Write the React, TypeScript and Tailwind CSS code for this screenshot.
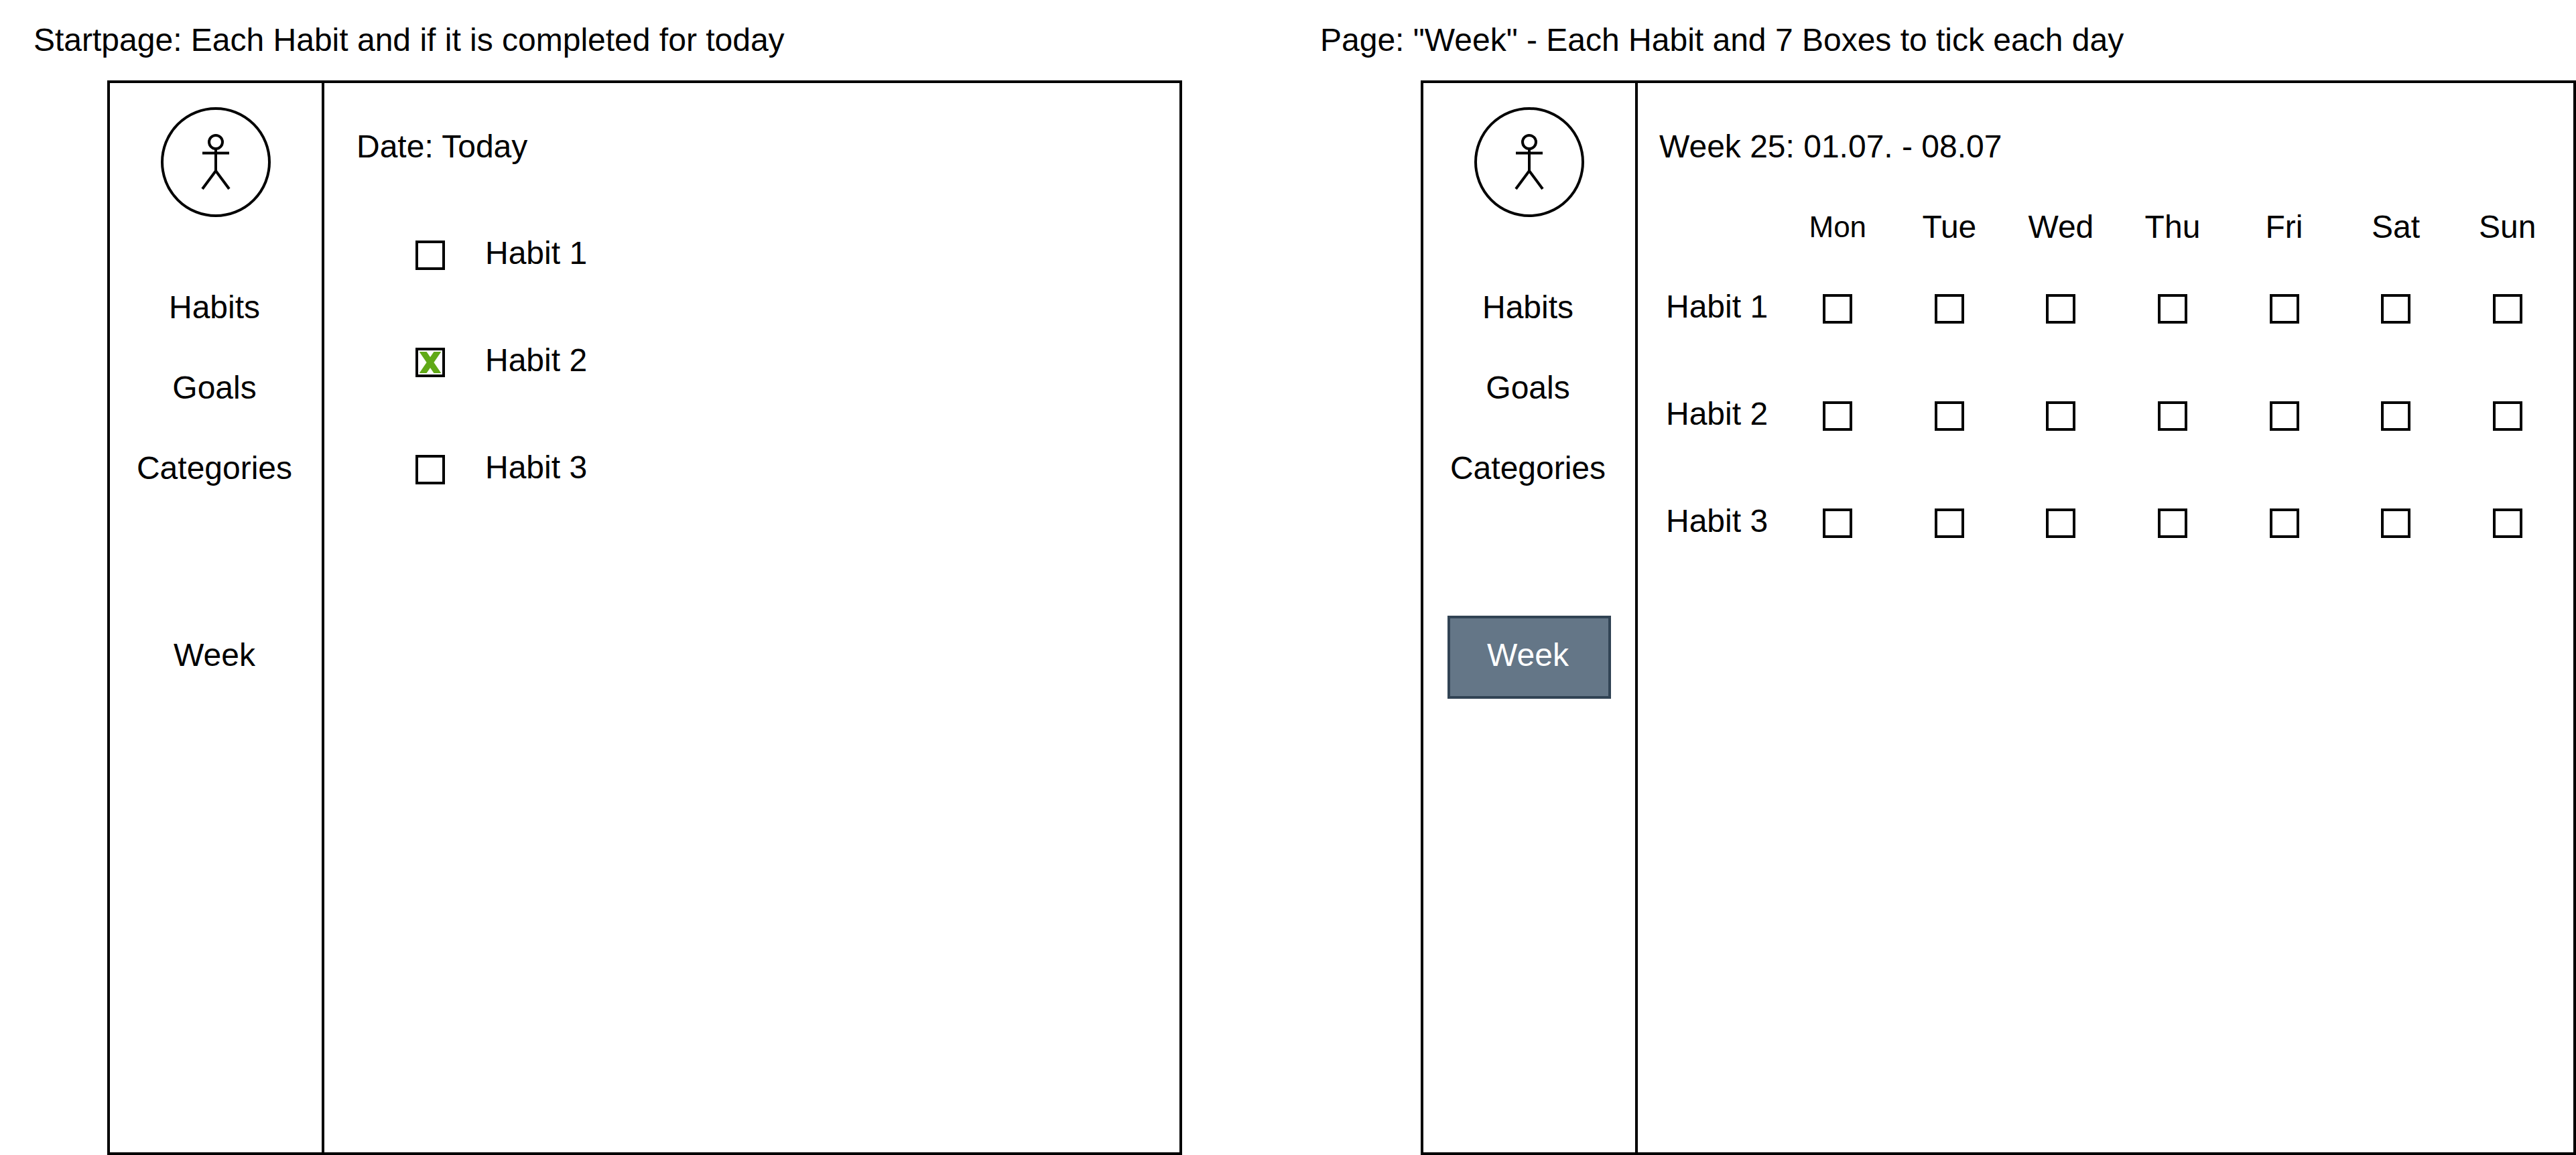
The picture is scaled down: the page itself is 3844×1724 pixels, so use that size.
import type { ReactNode } from "react";

const HABITS = ["Habit 1", "Habit 2", "Habit 3"];
const DAYS = ["Mon", "Tue", "Wed", "Thu", "Fri", "Sat", "Sun"];

function Avatar() {
  return (
    <svg
      viewBox="0 0 164 164"
      className="h-[164px] w-[164px] shrink-0"
      fill="none"
      stroke="black"
      strokeWidth="4"
      role="img"
      aria-label="Profile"
    >
      <circle cx="82" cy="82" r="80" />
      <circle cx="82" cy="52" r="10" />
      <path d="M82 62V96M62 68.5H102M82 95L62 122M82 95L102 122" />
    </svg>
  );
}

function Checkbox({
  id,
  label,
  defaultChecked = false,
}: {
  id: string;
  label?: string;
  defaultChecked?: boolean;
}) {
  return (
    <span className="relative block h-11 w-11">
      <input
        id={id}
        type="checkbox"
        aria-label={label}
        defaultChecked={defaultChecked}
        className="peer block h-11 w-11 appearance-none border-4 border-black bg-white"
      />
      <svg
        viewBox="0 0 32 32"
        className="pointer-events-none absolute top-1.5 left-1.5 hidden h-8 w-8 overflow-hidden peer-checked:block"
        stroke="#60a917"
        strokeWidth="9"
        aria-hidden="true"
      >
        <path d="M1 -6L31 38M31 -6L1 38" />
      </svg>
    </span>
  );
}

function NavItem({ children }: { children: ReactNode }) {
  return (
    <a href="#" className="block pr-1">
      {children}
    </a>
  );
}

function Sidebar({ weekActive = false }: { weekActive?: boolean }) {
  return (
    <aside className="flex w-80 shrink-0 flex-col items-center border-r-4 border-black pt-9">
      <Avatar />
      <nav className="mt-[107px] flex flex-col items-center gap-16 text-center">
        <NavItem>Habits</NavItem>
        <NavItem>Goals</NavItem>
        <NavItem>Categories</NavItem>
      </nav>
      <button
        type="button"
        className={
          weekActive
            ? "mt-48 h-[124px] w-[244px] border-4 border-[#314354] bg-[#647687] pr-1 pb-1.5 text-white"
            : "mt-48 h-[124px] w-[244px] border-4 border-transparent pr-1 pb-1.5"
        }
      >
        Week
      </button>
    </aside>
  );
}

function StartPage() {
  return (
    <div className="grow pt-[67px]">
      <h2 className="pl-12">Date: Today</h2>
      <ul className="mt-[54px] pl-[136px]">
        {HABITS.map((habit, i) => (
          <li key={habit} className="flex h-40 items-center gap-[60px]">
            <Checkbox id={`today-${i}`} defaultChecked={i === 1} />
            <label htmlFor={`today-${i}`} className="pb-1.5">
              {habit}
            </label>
          </li>
        ))}
      </ul>
    </div>
  );
}

function WeekPage() {
  return (
    <div className="grow pt-[67px] pr-[15px]">
      <h2 className="pl-8">Week 25: 01.07. - 08.07</h2>
      <table className="mt-16 w-full table-fixed border-collapse">
        <thead>
          <tr className="h-[70px] align-top">
            <td className="w-[215px]" />
            {DAYS.map((day) => (
              <th
                key={day}
                scope="col"
                className={day === "Mon" ? "text-[44px] font-normal" : "font-normal"}
              >
                {day}
              </th>
            ))}
          </tr>
        </thead>
        <tbody>
          {HABITS.map((habit) => (
            <tr key={habit} className="h-40">
              <th scope="row" className="pb-1.5 pl-[42px] text-left font-normal whitespace-nowrap">
                {habit}
              </th>
              {DAYS.map((day) => (
                <td key={day}>
                  <div className="flex justify-center">
                    <Checkbox id={`${habit}-${day}`} label={`${habit}, ${day}`} />
                  </div>
                </td>
              ))}
            </tr>
          ))}
        </tbody>
      </table>
    </div>
  );
}

export default function App() {
  return (
    <main className="grid min-h-screen grid-cols-1 bg-white font-['Liberation_Sans',Arial,sans-serif] text-[48px] leading-[56px] text-black xl:grid-cols-[1970fr_1874fr]">
      <section className="flex flex-col">
        <h1 className="pt-8 pb-8 pl-[50px]">
          Startpage: Each Habit and if it is completed for today
        </h1>
        <div className="mr-[206px] ml-40 flex grow border-4 border-black">
          <Sidebar />
          <StartPage />
        </div>
      </section>
      <section className="flex flex-col">
        <h1 className="pt-8 pb-8">
          Page: "Week" - Each Habit and 7 Boxes to tick each day
        </h1>
        <div className="ml-[150px] flex grow border-4 border-black">
          <Sidebar weekActive />
          <WeekPage />
        </div>
      </section>
    </main>
  );
}
